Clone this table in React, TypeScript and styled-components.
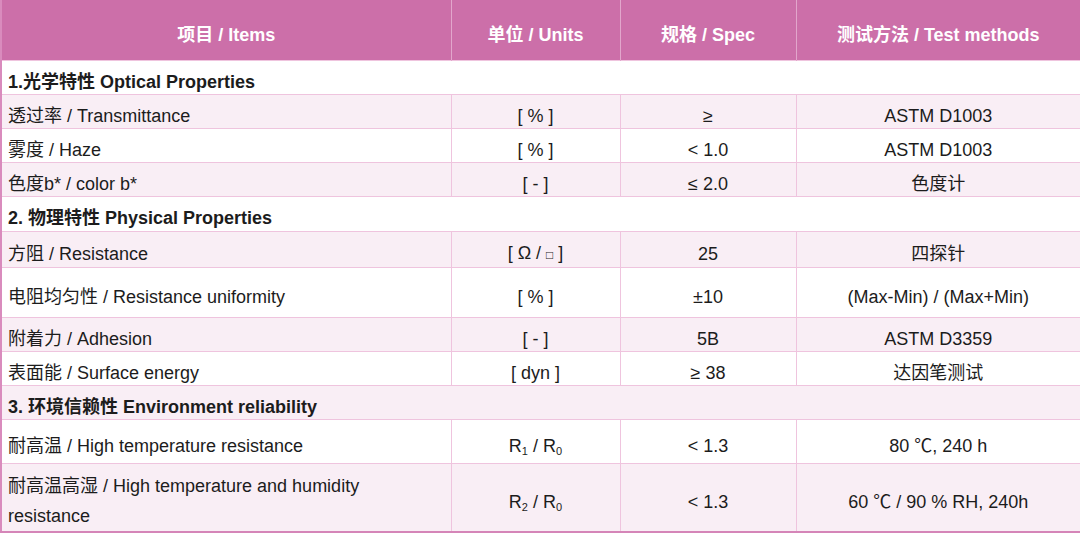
import styled, { createGlobalStyle } from 'styled-components';

const GlobalStyle = createGlobalStyle`
  html, body {
    margin: 0;
    padding: 0;
    background: #ffffff;
  }
  body {
    font-family: "Liberation Sans", "Noto Sans CJK SC", Arial, sans-serif;
    color: #1c1c1c;
  }
`;

const SpecTable = styled.table`
  width: 1080px;
  border-collapse: collapse;
  table-layout: fixed;
  font-size: 18px;
  border-left: 2px solid #d98bbd;
  border-right: 2px solid #d98bbd;
  border-bottom: 2px solid #d585b8;
`;

const HeadRow = styled.tr`
  height: 60px;
  background: #cc6fa9;
`;

const HeadCell = styled.th`
  color: #ffffff;
  font-weight: bold;
  font-size: 18px;
  text-align: center;
  padding: 7px 0 0;
  border-left: 1px solid #e2a6cc;
  &:first-child {
    border-left: none;
  }
`;

const BodyRow = styled.tr<{ $h: number }>`
  height: ${p => p.$h}px;
  &:nth-child(even) {
    background: #f9eef5;
  }
`;

const Cell = styled.td<{ $center?: boolean; $wrap?: boolean }>`
  text-align: ${p => (p.$center ? 'center' : 'left')};
  padding: ${p => (p.$wrap ? 7 : 10)}px ${p => (p.$center ? 0 : 8)}px 0 ${p => (p.$center ? 0 : 6)}px;
  line-height: ${p => (p.$wrap ? 30 : 23)}px;
  border-top: 1px solid #efc4de;
  border-left: 1px solid #efc4de;
  vertical-align: middle;
  &:first-child {
    border-left: none;
  }
`;

const SectionCell = styled(Cell)`
  font-weight: bold;
`;

const Sub = styled.sub`
  font-size: 11px;
  vertical-align: -3px;
  line-height: 0;
`;

const Box = styled.span`
  font-size: 12px;
`;

type Row =
  | { kind: 'section'; title: string; h: number }
  | { kind: 'item'; item: React.ReactNode; unit: React.ReactNode; spec: string; method: string; h: number; wrap?: boolean };

const rows: Row[] = [
  { kind: 'section', title: '1.光学特性 Optical Properties', h: 34 },
  { kind: 'item', item: '透过率 / Transmittance', unit: '[ % ]', spec: '≥', method: 'ASTM D1003', h: 34 },
  { kind: 'item', item: '雾度 / Haze', unit: '[ % ]', spec: '< 1.0', method: 'ASTM D1003', h: 34 },
  { kind: 'item', item: '色度b* / color b*', unit: '[ - ]', spec: '≤ 2.0', method: '色度计', h: 34 },
  { kind: 'section', title: '2. 物理特性 Physical Properties', h: 35 },
  { kind: 'item', item: '方阻 / Resistance', unit: <>[ Ω / <Box>□</Box> ]</>, spec: '25', method: '四探针', h: 34 },
  { kind: 'item', item: '电阻均匀性 / Resistance uniformity', unit: '[ % ]', spec: '±10', method: '(Max-Min) / (Max+Min)', h: 50 },
  { kind: 'item', item: '附着力 / Adhesion', unit: '[ - ]', spec: '5B', method: 'ASTM D3359', h: 34 },
  { kind: 'item', item: '表面能 / Surface energy', unit: '[ dyn ]', spec: '≥ 38', method: '达因笔测试', h: 34 },
  { kind: 'section', title: '3. 环境信赖性 Environment reliability', h: 34 },
  { kind: 'item', item: '耐高温 / High temperature resistance', unit: <>R<Sub>1</Sub> / R<Sub>0</Sub></>, spec: '< 1.3', method: '80 ℃, 240 h', h: 44 },
  { kind: 'item', item: '耐高温高湿 / High temperature and humidity resistance', unit: <>R<Sub>2</Sub> / R<Sub>0</Sub></>, spec: '< 1.3', method: '60 ℃ / 90 % RH, 240h', h: 67, wrap: true },
];

export default function App() {
  return <>
    <GlobalStyle />
    <SpecTable>
      <colgroup>
        <col style={{ width: 450 }} />
        <col style={{ width: 169 }} />
        <col style={{ width: 176 }} />
        <col style={{ width: 285 }} />
      </colgroup>
      <thead>
        <HeadRow>
          <HeadCell>项目 / Items</HeadCell>
          <HeadCell>单位 / Units</HeadCell>
          <HeadCell>规格 / Spec</HeadCell>
          <HeadCell>测试方法 / Test methods</HeadCell>
        </HeadRow>
      </thead>
      <tbody>
        {rows.map( ( row, i ) => row.kind === 'section'
          ? <BodyRow key={i} $h={row.h}>
            <SectionCell colSpan={4}>{row.title}</SectionCell>
          </BodyRow>
          : <BodyRow key={i} $h={row.h}>
            <Cell $wrap={row.wrap}>{row.item}</Cell>
            <Cell $center>{row.unit}</Cell>
            <Cell $center>{row.spec}</Cell>
            <Cell $center>{row.method}</Cell>
          </BodyRow> )}
      </tbody>
    </SpecTable>
  </>;
}
